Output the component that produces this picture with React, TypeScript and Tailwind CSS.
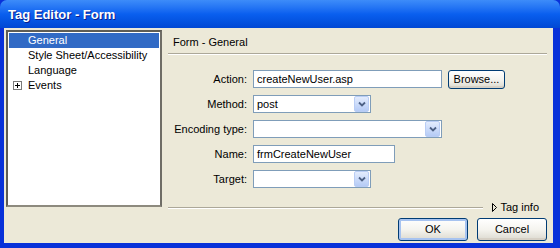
import React from 'react';

const ui = { fontFamily: '"Liberation Sans", Arial, sans-serif' };

const ComboArrow: React.FC = () => (
  <div className="w-[15px] h-[16px] rounded-[2px] border border-[#b9cdf5] bg-gradient-to-b from-[#e3ecfd] to-[#b5cbf6] flex items-center justify-center">
    <svg width="8" height="6" viewBox="0 0 8 6">
      <path d="M1 1.5 L4 4.5 L7 1.5" fill="none" stroke="#4d6185" strokeWidth="1.8" />
    </svg>
  </div>
);

const Combo: React.FC<{ width: string; value?: string }> = ({ width, value }) => (
  <div className={`${width} h-[18px] bg-white border border-[#7f9db9] flex items-center justify-between pl-[3px] pr-[1px]`}>
    <span>{value}</span>
    <ComboArrow />
  </div>
);

const XpButton: React.FC<{ label: string; className?: string; isDefault?: boolean }> = ({ label, className, isDefault }) => (
  <div className={`${className} rounded-[3px] border border-[#003c74] bg-gradient-to-b from-white via-[#f5f4ef] to-[#dcdad0] flex items-center justify-center ${isDefault ? 'shadow-[inset_0_0_0_2px_#a7c3f0]' : 'shadow-[inset_0_-2px_0_#d6d0c5]'}`}>
    {label}
  </div>
);

const FormRow: React.FC<{ label: string; children: React.ReactNode }> = ({ label, children }) => (
  <div className="flex items-center h-[18px]">
    <div className="w-[79px] text-right">{label}</div>
    <div className="ml-[6px] flex items-center">{children}</div>
  </div>
);

const App: React.FC = () => {
  const tree = [
    { label: 'General', selected: true },
    { label: 'Style Sheet/Accessibility' },
    { label: 'Language' },
    { label: 'Events', expandable: true },
  ];

  return (
    <div className="w-[560px] h-[248px] bg-[#0831d9] flex flex-col text-[11px] text-black overflow-hidden" style={ui}>
      <div className="h-[28px] shrink-0 rounded-t-[7px] bg-gradient-to-b from-[#3d8cf9] via-[#0a5fef] to-[#0148d4] flex items-center pl-[8px] pt-[2px]">
        <span className="text-white font-bold text-[13px] [text-shadow:1px_1px_0_#0a1e8c]">Tag Editor - Form</span>
      </div>

      <div className="flex-1 ml-[4px] mr-[7px] mb-[5px] bg-[#ece9d8] flex flex-col">
        <div className="flex items-start pt-[2px] pl-[2px]">
          <div className="w-[156px] h-[177px] bg-white border-2 border-t-[#5f5d55] border-l-[#5f5d55] border-b-[#8d8a7e] border-r-[#6f6d66] pt-[1px] px-[1px]">
            {tree.map((item) => (
              <div
                key={item.label}
                className={`h-[15px] flex items-center ${item.selected ? 'bg-[#316ac5] text-white' : ''}`}
              >
                <div className="w-[19px] shrink-0 flex justify-start pl-[4px]">
                  {item.expandable && (
                    <div className="w-[9px] h-[9px] border border-[#7a7a7a] flex items-center justify-center">
                      <svg width="5" height="5" viewBox="0 0 5 5">
                        <path d="M0 2.5 H5 M2.5 0 V5" stroke="#000" strokeWidth="1" />
                      </svg>
                    </div>
                  )}
                </div>
                <span>{item.label}</span>
              </div>
            ))}
          </div>

          <div className="flex-1 ml-[6px] mr-[6px] h-[184px] flex flex-col">
            <div className="h-[24px] flex items-center pl-[5px] pt-[2px] border-b border-[#aca899] shadow-[0_1px_0_#fff]">
              Form - General
            </div>

            <div className="flex flex-col gap-[7px] pt-[16px]">
              <FormRow label="Action:">
                <div className="w-[189px] h-[18px] bg-white border border-[#7f9db9] flex items-center pl-[3px]">createNewUser.asp</div>
                <XpButton label="Browse..." className="ml-[6px] w-[57px] h-[19px]" />
              </FormRow>
              <FormRow label="Method:">
                <Combo width="w-[118px]" value="post" />
              </FormRow>
              <FormRow label="Encoding type:">
                <Combo width="w-[189px]" />
              </FormRow>
              <FormRow label="Name:">
                <div className="w-[142px] h-[18px] bg-white border border-[#7f9db9] flex items-center pl-[3px]">frmCreateNewUser</div>
              </FormRow>
              <FormRow label="Target:">
                <Combo width="w-[118px]" />
              </FormRow>
            </div>

            <div className="mt-auto h-[14px] flex items-center">
              <div className="flex-1 border-b border-[#aca899] shadow-[0_1px_0_#fff]" />
              <div className="ml-[9px] flex items-center gap-[3px] pr-[8px]">
                <svg width="5" height="9" viewBox="0 0 5 9">
                  <path d="M0.5 0.5 L4.5 4.5 L0.5 8.5 Z" fill="none" stroke="#000" strokeWidth="1" />
                </svg>
                <span>Tag info</span>
              </div>
            </div>
          </div>
        </div>

        <div className="flex justify-end gap-[9px] pr-[6px] mt-[4px]">
          <XpButton label="OK" className="w-[70px] h-[23px]" isDefault />
          <XpButton label="Cancel" className="w-[70px] h-[23px]" />
        </div>
      </div>
    </div>
  );
};

export default App;
